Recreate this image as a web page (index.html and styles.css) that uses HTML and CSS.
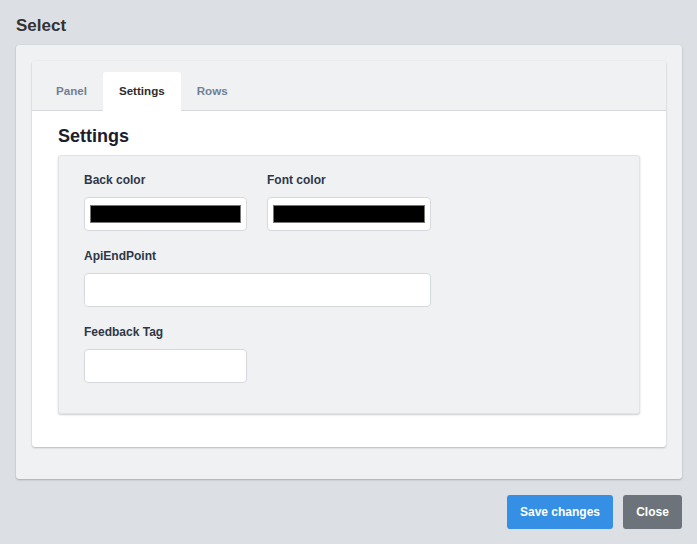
FILE: index.html
```html
<!DOCTYPE html>
<html>
<head>
<meta charset="utf-8">
<link rel="stylesheet" href="styles.css">
</head>
<body>
<div class="dialog">
  <h1 class="title">Select</h1>
  <div class="outer">
    <div class="card">
      <div class="tabs">
        <div class="tab">Panel</div>
        <div class="tab active">Settings</div>
        <div class="tab">Rows</div>
      </div>
      <div class="content">
        <h2 class="heading">Settings</h2>
        <div class="fieldset">
          <div class="row">
            <div class="field">
              <label class="label">Back color</label>
              <div class="input color-input"><span class="swatch"></span></div>
            </div>
            <div class="field">
              <label class="label">Font color</label>
              <div class="input color-input"><span class="swatch"></span></div>
            </div>
          </div>
          <div class="field">
            <label class="label">ApiEndPoint</label>
            <div class="input wide"></div>
          </div>
          <div class="field">
            <label class="label">Feedback Tag</label>
            <div class="input narrow"></div>
          </div>
        </div>
      </div>
    </div>
  </div>
  <div class="footer">
    <button class="btn primary">Save changes</button>
    <button class="btn secondary">Close</button>
  </div>
</div>
</body>
</html>
```

FILE: styles.css
```css
* { box-sizing: border-box; }
html, body { margin: 0; padding: 0; }
body {
  background: #dcdfe3;
  font-family: "Liberation Sans", Arial, sans-serif;
  width: 697px;
  height: 544px;
  overflow: hidden;
}
.dialog { padding: 0 15px 0 16px; }
.title {
  margin: 0;
  padding-top: 16px;
  height: 45px;
  font-size: 17px;
  line-height: 20px;
  font-weight: bold;
  color: #333;
}
.outer {
  background: #f0f1f3;
  border-radius: 3px;
  box-shadow: 0 1px 2px rgba(0,0,0,0.22), 0 0 1px rgba(0,0,0,0.12);
  padding: 16px 16px 32px 16px;
  height: 434px;
}
.card {
  background: #fff;
  border-radius: 3px;
  box-shadow: 0 1px 2px rgba(0,0,0,0.22), 0 0 1px rgba(0,0,0,0.12);
  height: 386px;
  overflow: hidden;
}
.tabs {
  display: flex;
  background: #f0f1f3;
  padding: 11px 0 0 8px;
  border-bottom: 1px solid #d6d9dd;
  height: 50px;
}
.tab {
  height: 38px;
  line-height: 38px;
  padding: 0 16px;
  font-size: 11.6px;
  font-weight: bold;
  color: #718096;
  border-radius: 3px 3px 0 0;
}
.tab.active {
  background: #fff;
  color: #2d2d2d;
  margin-bottom: -1px;
  height: 39px;
}
.content { padding: 12px 26px 33px 26px; }
.heading {
  margin: 0 0 6px 0;
  font-size: 18px;
  line-height: 26px;
  font-weight: bold;
  color: #1a202c;
}
.fieldset {
  background: #f0f1f3;
  border-radius: 3px;
  border: 1px solid #e0e3e7;
  box-shadow: 0 1px 2px rgba(0,0,0,0.2);
  padding: 15px 25px 30px 25px;
  height: 259px;
  display: flex;
  flex-direction: column;
  gap: 16px;
}
.row { display: flex; gap: 20px; }
.field { display: flex; flex-direction: column; }
.label {
  font-size: 12px;
  line-height: 18px;
  font-weight: bold;
  color: #2d3748;
  margin-bottom: 8px;
}
.input {
  height: 34px;
  background: #fff;
  border: 1px solid #d5d9de;
  border-radius: 4px;
}
.color-input { width: 163px; padding: 7px 5px; }
.row .field:nth-child(2) .color-input { width: 164px; }
.swatch {
  display: block;
  height: 18px;
  background: #000;
  border: 1px solid #767676;
}
.wide { width: 347px; }
.narrow { width: 163px; }
.footer {
  display: flex;
  justify-content: flex-end;
  gap: 10px;
  padding-top: 16px;
}
.btn {
  height: 34px;
  border: none;
  border-radius: 3px;
  font-family: "Liberation Sans", Arial, sans-serif;
  font-size: 12px;
  font-weight: bold;
  color: #fff;
  padding: 0;
}
.primary { background: #358fe4; width: 106px; }
.secondary { background: #6c737b; width: 59px; }
```
